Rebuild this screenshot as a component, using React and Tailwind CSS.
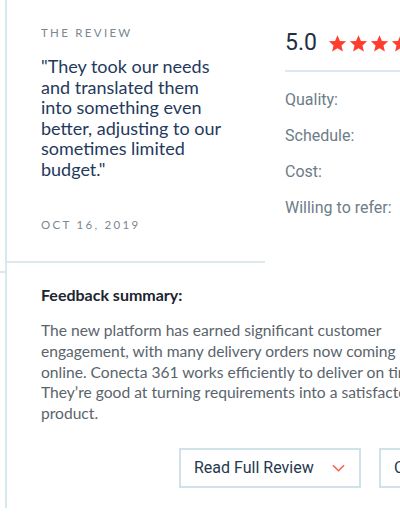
import React from "react";

function Star() {
  return (
    <svg viewBox="0 0 24 24" className="w-[19px] h-[19px] shrink-0" fill="#ff3d2e">
      <path d="M12 1.5l3.1 7.2 7.8.6-5.9 5.1 1.8 7.6L12 18l-6.8 4 1.8-7.6-5.9-5.1 7.8-.6z" />
    </svg>
  );
}

export default function App() {
  const labels = ["Quality:", "Schedule:", "Cost:", "Willing to refer:"];
  return (
    <div className="relative w-[400px] h-[516px] overflow-hidden bg-white">
      {/* stray border of the previous block */}
      <div className="absolute left-0 top-[271px] w-[5px] h-[2px] bg-[#d8e8ef]" />

      <div className="ml-[5px] w-[560px] h-[508px] border-l-2 border-[#d8e8ef]">
        {/* top row */}
        <div className="flex">
          <div className="w-[258px] shrink-0 border-b-2 border-[#dde9ef] pl-[34px] pr-[4px] pt-[26px] pb-[29px]">
            <div className="font-['Lato'] text-[11.5px] leading-[14px] tracking-[0.2em] text-[#7b8791]">
              THE REVIEW
            </div>
            <p className="mt-[16px] font-['Lato'] text-[18px] leading-[20.5px] text-[#1f3a5c] whitespace-nowrap">
              "They took our needs
              <br />
              and translated them
              <br />
              into something even
              <br />
              better, adjusting to our
              <br />
              sometimes limited
              <br />
              budget."
            </p>
            <div className="mt-[39px] font-['Lato'] text-[11.5px] leading-[14px] tracking-[0.2em] text-[#7b8791]">
              OCT 16, 2019
            </div>
          </div>

          <div className="ml-[20px] flex-1 pt-[31px]">
            <div className="flex items-center gap-[11px] h-[24px]">
              <span className="font-['Roboto'] text-[23px] leading-[24px] text-[#1f2f3f]">5.0</span>
              <div className="flex gap-[2px]">
                <Star />
                <Star />
                <Star />
                <Star />
                <Star />
              </div>
            </div>
            <div className="mt-[15px] h-[2px] bg-[#dde9ef]" />
            <div className="mt-[19px] flex flex-col gap-[18px]">
              {labels.map((l) => (
                <div key={l} className="font-['Roboto'] text-[16px] leading-[18px] text-[#6d7c89]">
                  {l}
                </div>
              ))}
            </div>
          </div>
        </div>

        {/* feedback */}
        <div className="pl-[34px] pt-[22px]">
          <div className="font-['Lato'] font-bold text-[16px] leading-[20px] text-[#1c2530]">
            Feedback summary:
          </div>
          <p className="mt-[15px] w-[398px] font-['Lato'] text-[15.6px] leading-[20.8px] text-[#5a646d]">
            The new platform has earned significant customer engagement, with many delivery orders now coming online. Conecta 361 works efficiently to deliver on time. They’re good at turning requirements into a satisfactory product.
          </p>
          <div className="mt-[24px] ml-[138px] flex gap-[18px]">
            <button className="w-[182px] h-[40px] border-2 border-[#cfe2ea] flex items-center pl-[13px] pr-[14px] justify-between">
              <span className="font-['Roboto'] text-[16px] text-[#25384d]">Read Full Review</span>
              <svg viewBox="0 0 14 8" className="w-[13px] h-[8px]" fill="none" stroke="#ff5a4a" strokeWidth="1.6">
                <path d="M1 1l6 6 6-6" />
              </svg>
            </button>
            <button className="w-[182px] h-[40px] border-2 border-[#cfe2ea] flex items-center pl-[13px]">
              <span className="font-['Roboto'] text-[16px] text-[#25384d]">Contact</span>
            </button>
          </div>
        </div>
      </div>
    </div>
  );
}
